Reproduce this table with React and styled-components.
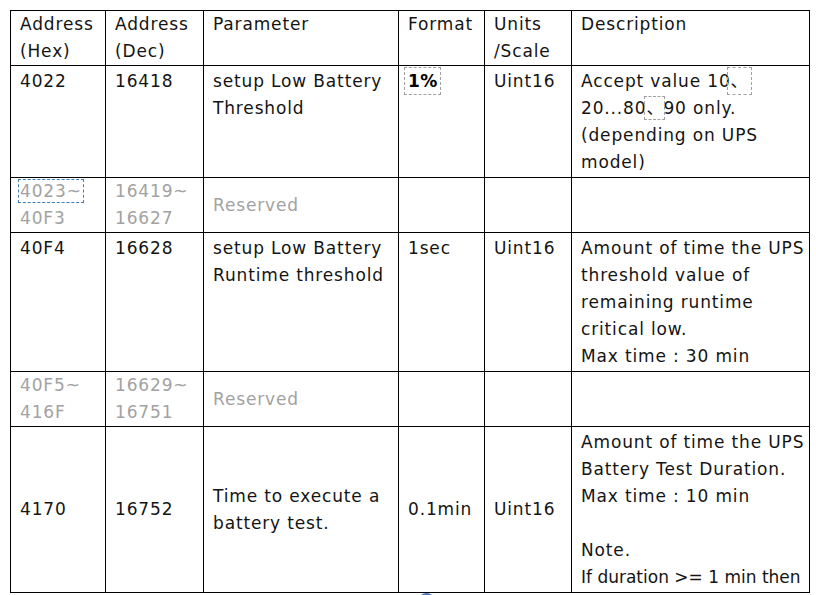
import React from 'react';
import styled, { createGlobalStyle } from 'styled-components';

const GlobalStyle = createGlobalStyle`
  html, body {
    margin: 0;
    padding: 0;
    background: #fff;
    overflow: hidden;
  }
  body {
    font-family: "DejaVu Sans", "Noto Sans CJK JP", sans-serif;
  }
`;

const Page = styled.div`
  position: relative;
  width: 816px;
  height: 595px;
  padding: 10px 0 0 10px;
  box-sizing: border-box;
  overflow: hidden;
`;

const Table = styled.table`
  border-collapse: collapse;
  table-layout: fixed;
  width: 799px;
  color: #141414;
  font-size: 17px;
  letter-spacing: 0.85px;
  line-height: 27px;
`;

const Cell = styled.td`
  border: 1px solid #000;
  padding: ${p => (p.$tight ? '0' : '1.5px')} 2px ${p => (p.$tight ? '0' : '1.5px')} 9px;
  vertical-align: ${p => (p.$middle ? 'middle' : 'top')};
  white-space: nowrap;
  overflow: hidden;
  font-weight: normal;
  text-align: left;
  color: ${p => (p.$muted ? '#a2a2a2' : 'inherit')};
`;

// dotted frames left over from word-processor fields
const Field = styled.span`
  outline: 1px dashed ${p => (p.$blue ? '#3f7fb8' : '#a0a0a0')};
  outline-offset: ${p => p.$offset || 2}px;
  font-weight: ${p => (p.$bold ? 'bold' : 'normal')};
  color: ${p => (p.$bold ? '#000' : 'inherit')};
  letter-spacing: ${p => (p.$bold ? '0.3px' : 'inherit')};
`;

const Mark = styled.span`
  font-family: "Noto Sans CJK JP", sans-serif;
  letter-spacing: 0;
  line-height: 0;
`;

const Tight = styled.span`
  letter-spacing: 0;
`;

const Dot = styled.div`
  position: absolute;
  left: 418px;
  top: 593px;
  width: 17px;
  height: 17px;
  border-radius: 50%;
  background: #4a74c0;
`;

const widths = [95, 98, 195, 86, 87, 238];

const Lines = ({ items }) =>
  items.map((it, i) => (
    <React.Fragment key={i}>
      {i > 0 && <br />}
      {it === '' ? '\u00a0' : it}
    </React.Fragment>
  ));

const rows = [
  {
    cells: [
      ['4022'],
      ['16418'],
      ['setup Low Battery', 'Threshold'],
      [<Field $bold $offset={3}>1%</Field>],
      ['Uint16'],
      [
        <>Accept value 10<Field $offset={3}><Mark>、</Mark></Field></>,
        <>20...80<Field $offset={1}><Mark>、</Mark></Field>90 only.</>,
        '(depending on UPS',
        'model)',
      ],
    ],
  },
  {
    muted: true,
    middle: true,
    cells: [
      [<Field $blue $offset={1}>4023~</Field>, '40F3'],
      ['16419~', '16627'],
      ['Reserved'],
      [],
      [],
      [],
    ],
  },
  {
    cells: [
      ['40F4'],
      ['16628'],
      ['setup Low Battery', 'Runtime threshold'],
      ['1sec'],
      ['Uint16'],
      [
        'Amount of time the UPS',
        'threshold value of',
        'remaining runtime',
        'critical low.',
        'Max time : 30 min',
      ],
    ],
  },
  {
    muted: true,
    middle: true,
    cells: [['40F5~', '416F'], ['16629~', '16751'], ['Reserved'], [], [], []],
  },
  {
    middle: true,
    cells: [
      ['4170'],
      ['16752'],
      ['Time to execute a', 'battery test.'],
      ['0.1min'],
      ['Uint16'],
      [
        'Amount of time the UPS',
        'Battery Test Duration.',
        'Max time : 10 min',
        '',
        'Note.',
        <Tight>If duration &gt;= 1 min then</Tight>,
      ],
    ],
  },
];

const headers = [
  ['Address', '(Hex)'],
  ['Address', '(Dec)'],
  ['Parameter'],
  ['Format'],
  ['Units', '/Scale'],
  ['Description'],
];

const App = () => (
  <Page>
    <GlobalStyle />
    <Table>
      <colgroup>
        {widths.map((w, i) => (
          <col key={i} style={{ width: w }} />
        ))}
      </colgroup>
      <thead>
        <tr>
          {headers.map((h, i) => (
            <Cell as="th" key={i} $tight>
              <Lines items={h} />
            </Cell>
          ))}
        </tr>
      </thead>
      <tbody>
        {rows.map((r, ri) => (
          <tr key={ri}>
            {r.cells.map((c, ci) => (
              <Cell key={ci} $muted={r.muted} $middle={r.middle} $tight={r.muted}>
                <Lines items={c} />
              </Cell>
            ))}
          </tr>
        ))}
      </tbody>
    </Table>
    <Dot />
  </Page>
);

export default App;
